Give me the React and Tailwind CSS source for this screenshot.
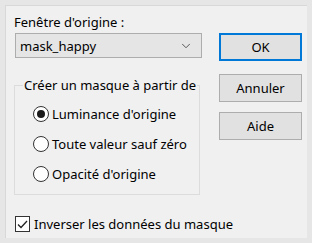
import { ChevronDown } from 'lucide-react';

const Radio = ({ checked, label }) => (
  <div className="flex items-center h-[30px]">
    <span className="shrink-0 w-[16px] h-[16px] rounded-full border border-[#333333] bg-white flex items-center justify-center">
      {checked && <span className="w-[8px] h-[8px] rounded-full bg-[#1a1a1a]" />}
    </span>
    <span className="ml-[3px] whitespace-nowrap">{label}</span>
  </div>
);

const Button = ({ children, primary }) => (
  <button
    className={
      primary
        ? 'w-[83px] h-[28px] bg-[#e1e1e1] border-2 border-[#0078d7] text-black'
        : 'w-[83px] h-[28px] bg-[#e1e1e1] border border-[#adadad] text-black'
    }
  >
    {children}
  </button>
);

export default function App() {
  return (
    <div
      className="w-[312px] h-[243px] bg-[#e6e6e6] p-[5px] text-[13px] text-black leading-[20px]"
      style={{ fontFamily: '"Noto Sans", "Liberation Sans", sans-serif' }}
    >
      <div className="h-full bg-[#f0f0f0] border-l border-t border-[#d8d8d8] flex pl-[9px] pt-[6px]">
        {/* Left column */}
        <div className="w-[187px] shrink-0">
          <div className="-ml-[1px] h-[20px] whitespace-nowrap">Fenêtre d'origine :</div>
          <div className="mt-[1px] h-[25px] bg-[#e5e5e5] border border-[#adadad] flex items-center justify-between pl-[4px] pr-[8px]">
            <span>mask_happy</span>
            <ChevronDown className="w-[14px] h-[14px] text-[#444]" strokeWidth={1.5} />
          </div>

          <fieldset className="mt-[17px] -ml-[1px] w-[186px] min-w-0 border border-[#dcdcdc] p-0 pb-[5px]">
            <legend className="ml-[8px] px-[1px] h-[20px] whitespace-nowrap">Créer un masque à partir de</legend>
            <div className="pt-[4px] pl-[18px]">
              <Radio checked label="Luminance d'origine" />
              <Radio label="Toute valeur sauf zéro" />
              <Radio label="Opacité d'origine" />
            </div>
          </fieldset>

          <div className="mt-[19px] flex items-center h-[20px]">
            <span className="shrink-0 w-[15px] h-[16px] border border-[#333333] bg-white flex items-center justify-center">
              <svg width="11" height="9" viewBox="0 0 11 9" fill="none">
                <path d="M1 4.5 L4 7.5 L10 1" stroke="#222" strokeWidth="1.3" />
              </svg>
            </span>
            <span className="ml-[4px] whitespace-nowrap">Inverser les données du masque</span>
          </div>
        </div>

        {/* Right column */}
        <div className="ml-[17px] pt-[21px] flex flex-col">
          <Button primary>OK</Button>
          <div className="mt-[13px]">
            <Button>Annuler</Button>
          </div>
          <div className="mt-[10px]">
            <Button>Aide</Button>
          </div>
        </div>
      </div>
    </div>
  );
}
